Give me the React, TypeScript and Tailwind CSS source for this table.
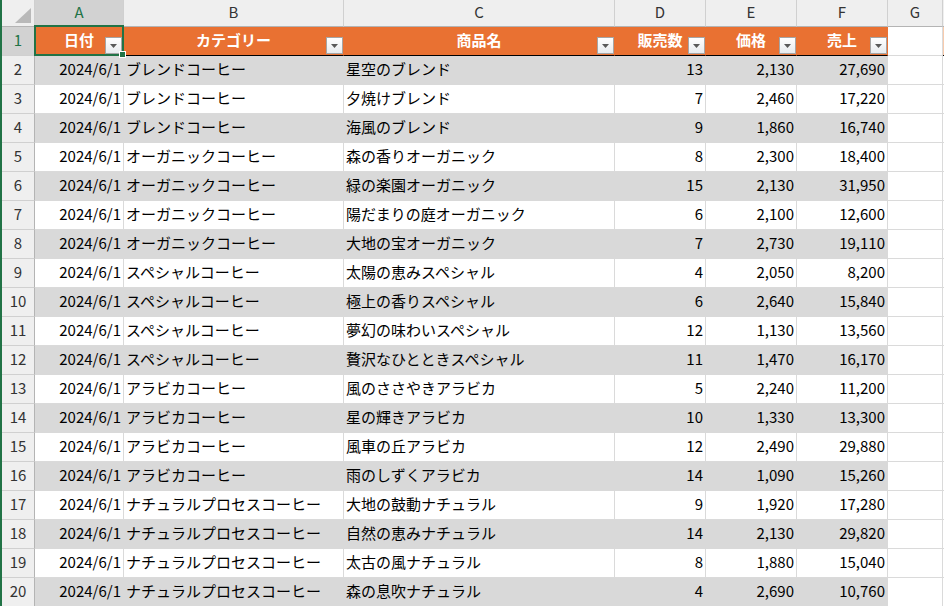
import React from "react";

type Row = [string, string, string, string, string, string];

const rows: Row[] = [
  ["2024/6/1", "ブレンドコーヒー", "星空のブレンド", "13", "2,130", "27,690"],
  ["2024/6/1", "ブレンドコーヒー", "夕焼けブレンド", "7", "2,460", "17,220"],
  ["2024/6/1", "ブレンドコーヒー", "海風のブレンド", "9", "1,860", "16,740"],
  ["2024/6/1", "オーガニックコーヒー", "森の香りオーガニック", "8", "2,300", "18,400"],
  ["2024/6/1", "オーガニックコーヒー", "緑の楽園オーガニック", "15", "2,130", "31,950"],
  ["2024/6/1", "オーガニックコーヒー", "陽だまりの庭オーガニック", "6", "2,100", "12,600"],
  ["2024/6/1", "オーガニックコーヒー", "大地の宝オーガニック", "7", "2,730", "19,110"],
  ["2024/6/1", "スペシャルコーヒー", "太陽の恵みスペシャル", "4", "2,050", "8,200"],
  ["2024/6/1", "スペシャルコーヒー", "極上の香りスペシャル", "6", "2,640", "15,840"],
  ["2024/6/1", "スペシャルコーヒー", "夢幻の味わいスペシャル", "12", "1,130", "13,560"],
  ["2024/6/1", "スペシャルコーヒー", "贅沢なひとときスペシャル", "11", "1,470", "16,170"],
  ["2024/6/1", "アラビカコーヒー", "風のささやきアラビカ", "5", "2,240", "11,200"],
  ["2024/6/1", "アラビカコーヒー", "星の輝きアラビカ", "10", "1,330", "13,300"],
  ["2024/6/1", "アラビカコーヒー", "風車の丘アラビカ", "12", "2,490", "29,880"],
  ["2024/6/1", "アラビカコーヒー", "雨のしずくアラビカ", "14", "1,090", "15,260"],
  ["2024/6/1", "ナチュラルプロセスコーヒー", "大地の鼓動ナチュラル", "9", "1,920", "17,280"],
  ["2024/6/1", "ナチュラルプロセスコーヒー", "自然の恵みナチュラル", "14", "2,130", "29,820"],
  ["2024/6/1", "ナチュラルプロセスコーヒー", "太古の風ナチュラル", "8", "1,880", "15,040"],
  ["2024/6/1", "ナチュラルプロセスコーヒー", "森の息吹ナチュラル", "4", "2,690", "10,760"],
];

// widths include the right border
const widths = ["w-[89px]", "w-[220px]", "w-[271px]", "w-[91px]", "w-[91px]", "w-[91px]"];
const letters = ["A", "B", "C", "D", "E", "F"];
const headers = ["日付", "カテゴリー", "商品名", "販売数", "価格", "売上"];
// which columns are right aligned
const right = [true, false, false, true, true, true];

const FilterButton = ({ inset }: { inset?: boolean }) => (
  <span
    className={
      "absolute bottom-[1px] w-[17px] h-[17px] border border-[#a5a5a5] bg-gradient-to-b from-white to-[#e8ebee] flex items-center justify-center " +
      (inset ? "right-[1px]" : "right-0")
    }
  >
    <svg width="7" height="4" viewBox="0 0 7 4">
      <path d="M0 0h7L3.5 4z" fill="#595959" />
    </svg>
  </span>
);

const App = (): JSX.Element => {
  return (
    <div className="relative w-[944px] h-[606px] overflow-hidden bg-white flex font-['Noto_Sans_CJK_JP',sans-serif] text-[15px] text-black">
      <div className="w-[2px] h-full bg-[#217346] shrink-0"></div>

      <div className="flex flex-col flex-1">
        {/* column letters */}
        <div className="flex h-[27px] shrink-0">
          <div className="w-[33px] h-full shrink-0 box-border border-r border-b border-r-[#cfcfcf] border-b-[#b4b4b4] bg-[#efefef] flex items-end justify-end pr-[3px] pb-[3px]">
            <svg width="16" height="15" viewBox="0 0 16 15">
              <path d="M16 0V15H0z" fill="#b9b9b9" />
            </svg>
          </div>
          {letters.map((l, i) => (
            <div
              key={l}
              className={
                widths[i] +
                " h-full shrink-0 box-border border-r border-b border-r-[#d0d0d0] flex items-center justify-center pb-[1px] " +
                (i === 0
                  ? "bg-[#d2d2d2] text-[#217346] border-b-[#217346]"
                  : "bg-[#efefef] text-[#333] border-b-[#b4b4b4]")
              }
            >
              {l}
            </div>
          ))}
          <div className="w-[55px] h-full shrink-0 box-border border-r border-b border-r-[#d0d0d0] border-b-[#b4b4b4] bg-[#efefef] text-[#333] flex items-center justify-center pb-[1px]">
            G
          </div>
          <div className="flex-1 h-full box-border border-b border-b-[#b4b4b4] bg-[#efefef]"></div>
        </div>

        {/* table header row */}
        <div className="flex h-[29px] shrink-0">
          <div className="w-[33px] h-full shrink-0 box-border border-r border-b border-r-[#217346] border-b-[#d0d0d0] bg-[#d2d2d2] text-[#217346] flex items-center justify-center pb-[1px]">
            1
          </div>
          {headers.map((h, i) => (
            <div
              key={h}
              className={
                widths[i] +
                " relative h-full shrink-0 box-border border-r border-b border-r-[#e97132] border-b-black bg-[#e97132] text-white font-bold flex items-center justify-center pb-[1px]"
              }
            >
              {h}
              <FilterButton inset={i === 0} />
            </div>
          ))}
          <div className="w-[55px] h-full shrink-0 box-border border-r border-b border-[#dadada] bg-white"></div>
          <div className="flex-1 h-full box-border border-b border-b-black bg-[#f8cbad]"></div>
        </div>

        {/* data rows */}
        {rows.map((r, ri) => {
          const band = ri % 2 === 0;
          return (
            <div key={ri} className="flex h-[29px] shrink-0">
              <div className="w-[33px] h-full shrink-0 box-border border-r border-b border-r-[#b4b4b4] border-b-[#d0d0d0] bg-[#efefef] text-[#333] flex items-center justify-center pb-[1px]">
                {ri + 2}
              </div>
              {r.map((c, ci) => (
                <div
                  key={ci}
                  className={
                    widths[ci] +
                    " h-full shrink-0 box-border border-r border-b flex items-center px-[2px] pb-[1px] whitespace-nowrap overflow-hidden " +
                    (right[ci] ? "justify-end " : "justify-start ") +
                    (band ? "bg-[#d9d9d9] border-[#d9d9d9]" : "bg-white border-[#dadada]")
                  }
                >
                  {c}
                </div>
              ))}
              <div className="w-[55px] h-full shrink-0 box-border border-r border-b border-[#dadada] bg-white"></div>
              <div className="flex-1 h-full box-border border-b border-[#dadada] bg-white"></div>
            </div>
          );
        })}
      </div>

      {/* active cell A1 */}
      <div className="absolute left-[34px] top-[25px] w-[90px] h-[31px] border-2 border-[#217346] pointer-events-none"></div>
      <div className="absolute left-[119px] top-[51px] w-[7px] h-[7px] bg-[#217346] border border-white pointer-events-none"></div>
    </div>
  );
};

export default App;
